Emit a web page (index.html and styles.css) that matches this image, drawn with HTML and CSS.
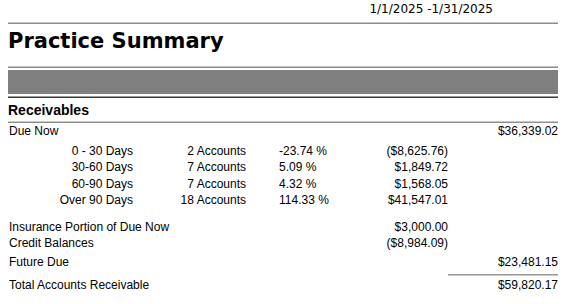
FILE: index.html
```html
<!DOCTYPE html>
<html>
<head>
<meta charset="utf-8">
<link rel="stylesheet" href="styles.css">
</head>
<body>
<div class="page">
  <div class="date">1/1/2025 -1/31/2025</div>
  <div class="rule rule-top"></div>
  <h1 class="title">Practice Summary</h1>
  <div class="rule"></div>
  <div class="bar"></div>
  <div class="rule rule-dark"></div>
  <h2 class="section">Receivables</h2>
  <div class="rule rule-light"></div>

  <div class="grid">
    <div class="label span4">Due Now</div>
    <div class="total">$36,339.02</div>
  </div>

  <div class="grid aging">
    <div class="days">0 - 30 Days</div><div class="accts">2 Accounts</div><div class="pct">-23.74 %</div><div class="amt">($8,625.76)</div><div class="total"></div>
    <div class="days">30-60 Days</div><div class="accts">7 Accounts</div><div class="pct">5.09 %</div><div class="amt">$1,849.72</div><div class="total"></div>
    <div class="days">60-90 Days</div><div class="accts">7 Accounts</div><div class="pct">4.32 %</div><div class="amt">$1,568.05</div><div class="total"></div>
    <div class="days">Over 90 Days</div><div class="accts">18 Accounts</div><div class="pct">114.33 %</div><div class="amt">$41,547.01</div><div class="total"></div>
  </div>

  <div class="grid other">
    <div class="label span3">Insurance Portion of Due Now</div><div class="amt">$3,000.00</div><div class="total"></div>
    <div class="label span3">Credit Balances</div><div class="amt">($8,984.09)</div><div class="total"></div>
  </div>

  <div class="grid future">
    <div class="label span4">Future Due</div>
    <div class="total">$23,481.15</div>
  </div>

  <div class="grid">
    <div class="span4"></div>
    <div class="sum-rule"></div>
  </div>

  <div class="grid grand">
    <div class="label span4">Total Accounts Receivable</div>
    <div class="total">$59,820.17</div>
  </div>
</div>
</body>
</html>
```
FILE: styles.css
```css
* { box-sizing: border-box; }
html, body { margin: 0; padding: 0; background: #fff; color: #000; }
.page {
  width: 558px;
  padding-left: 8px;
  font-family: "Liberation Sans", Arial, sans-serif;
  font-size: 12px;
}
.date {
  font-family: "DejaVu Sans", Verdana, sans-serif;
  font-size: 12px;
  line-height: 16px;
  padding-top: 1px;
  padding-right: 65px;
  text-align: right;
  margin-bottom: 5px;
}
.rule {
  height: 2px;
  border-top: 1px solid #c4c4c4;
  border-bottom: 1px solid #8c8c8c;
}
.rule-dark {
  border-top-color: #9a9a9a;
  border-bottom-color: #3a3a3a;
}
.rule-light {
  border-top-color: #c8c8c8;
  border-bottom-color: #8e8e8e;
}
.title {
  font-family: "DejaVu Sans", Verdana, sans-serif;
  font-weight: bold;
  font-size: 21px;
  line-height: 24px;
  margin: 5px 0 13px 0;
}
.bar {
  height: 24px;
  background: #808080;
  margin: 2px 0;
}
.section {
  font-family: "Liberation Sans", Arial, sans-serif;
  font-weight: bold;
  font-size: 14px;
  line-height: 16px;
  margin: 4px 0 3px 0;
}
.grid {
  display: grid;
  grid-template-columns: 125px 113px 90px 112px 110px;
  line-height: 16.5px;
}
.aging { margin-top: 3px; }
.other { margin-top: 10px; }
.future { margin-top: 2.5px; margin-bottom: 3.5px; }
.grand { margin-top: 1px; }
.span3 { grid-column: span 3; }
.span4 { grid-column: span 4; }
.days, .accts, .amt, .total { text-align: right; }
.pct { padding-left: 33px; }
.label { padding-left: 1px; }
.sum-rule {
  height: 2px;
  border-top: 1px solid #9a9a9a;
  border-bottom: 1px solid #c8c8c8;
}
```
